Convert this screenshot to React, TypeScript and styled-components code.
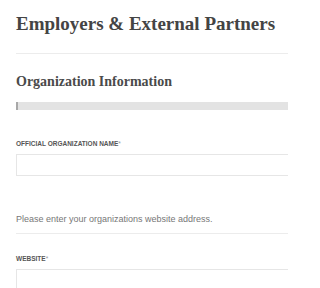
import React from "react";
import styled, { createGlobalStyle } from "styled-components";

const GlobalStyle = createGlobalStyle`
	html, body {
		margin: 0;
		padding: 0;
		background: #ffffff;
		overflow: hidden;
	}
`;

const Page = styled.div`
	display: flex;
	flex-direction: column;
	padding: 12px 0 0 16px;
	width: 288px;
	height: 288px;
	box-sizing: border-box;
	overflow: hidden;
`;

const Title = styled.h1`
	margin: 0;
	font-family: "Liberation Serif", "Times New Roman", serif;
	font-weight: bold;
	font-size: 19px;
	line-height: 24px;
	color: #444444;
	white-space: nowrap;
`;

const Rule = styled.hr`
	margin: 17px 0 0;
	border: 0;
	border-top: 1px solid #ececec;
	width: 100%;
`;

const SectionTitle = styled.h2`
	margin: 18px 0 0;
	font-family: "Liberation Serif", "Times New Roman", serif;
	font-weight: bold;
	font-size: 14px;
	line-height: 20px;
	color: #4a4a4a;
	white-space: nowrap;
`;

const Progress = styled.div`
	margin-top: 10px;
	height: 8px;
	background: #e3e3e3;
	width: 100%;
	flex-shrink: 0;
	display: flex;
`;

const ProgressFill = styled.div<{ $pct: number }>`
	width: ${(p) => p.$pct}%;
	min-width: 2px;
	background: #a8a8a8;
`;

const Field = styled.div<{ $top: number }>`
	display: flex;
	flex-direction: column;
	flex-shrink: 0;
	margin-top: ${(p) => p.$top}px;
`;

const Label = styled.label`
	font-family: "Liberation Sans", Arial, sans-serif;
	font-size: 6.5px;
	font-weight: bold;
	line-height: 8px;
	color: #555555;
	text-transform: uppercase;
	white-space: nowrap;
`;

const Required = styled.span`
	color: #999999;
	font-weight: normal;
`;

const Input = styled.input`
	margin-top: 6px;
	height: 22px;
	box-sizing: border-box;
	border: 1px solid #e6e6e6;
	background: #ffffff;
	width: calc(100% + 24px);
	padding: 0 6px;
	outline: none;
`;

const Hint = styled.p`
	margin: 36px 0 0;
	padding-bottom: 7px;
	font-family: "Liberation Sans", Arial, sans-serif;
	font-size: 9px;
	line-height: 14px;
	color: #777777;
	border-bottom: 1px solid #ececec;
	white-space: nowrap;
	flex-shrink: 0;
`;

const App: React.FC = () => {
	return (
		<>
			<GlobalStyle />
			<Page>
				<Title>Employers &amp; External Partners</Title>
				<Rule />
				<SectionTitle>Organization Information</SectionTitle>
				<Progress>
					<ProgressFill $pct={0.5} />
				</Progress>

				<Field $top={30}>
					<Label>
						Official Organization Name<Required>*</Required>
					</Label>
					<Input type="text" />
				</Field>

				<Hint>Please enter your organizations website address.</Hint>

				<Field $top={21}>
					<Label>
						Website<Required>*</Required>
					</Label>
					<Input type="text" />
				</Field>
			</Page>
		</>
	);
};

export default App;
